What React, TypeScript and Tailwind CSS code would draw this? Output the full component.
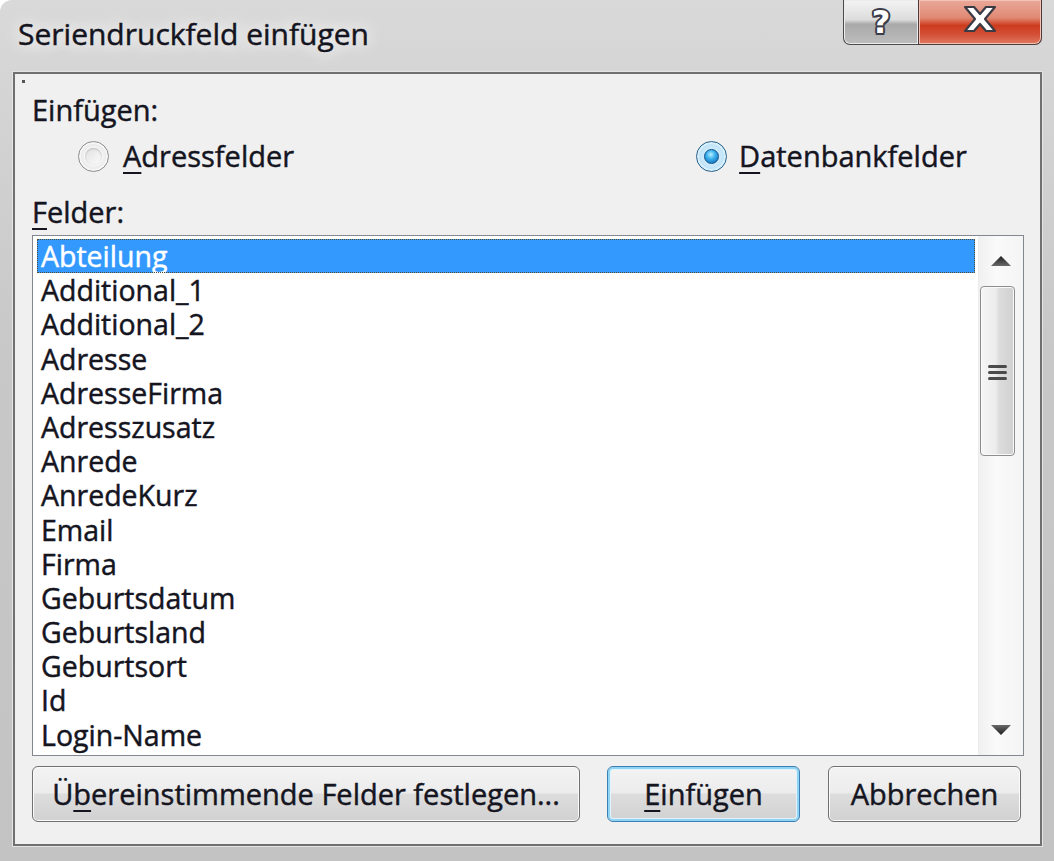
import type { ReactNode } from 'react'

const fields = [
  'Abteilung',
  'Additional_1',
  'Additional_2',
  'Adresse',
  'AdresseFirma',
  'Adresszusatz',
  'Anrede',
  'AnredeKurz',
  'Email',
  'Firma',
  'Geburtsdatum',
  'Geburtsland',
  'Geburtsort',
  'Id',
  'Login-Name',
  'Mobil',
  'Nachname',
  'Ort',
]

function U({ children }: { children: ReactNode }) {
  return <span className="underline decoration-[2px] underline-offset-[5px]">{children}</span>
}

function Radio({ checked }: { checked?: boolean }) {
  if (checked) {
    return (
      <span className="flex h-[31px] w-[31px] items-center justify-center rounded-full border border-[#2c628b] bg-[radial-gradient(circle,#e6f6ff_0%,#bfe3f7_60%,#8ccbee_100%)] shadow-[inset_0_0_0_2px_#d8f0fc]">
        <span className="h-[15px] w-[15px] rounded-full border border-[#0d4f8a] bg-[radial-gradient(circle_at_45%_35%,#b8f0ff_0%,#3ab0ec_40%,#0a5fb0_100%)]" />
      </span>
    )
  }
  return (
    <span className="flex h-[31px] w-[31px] items-center justify-center rounded-full border border-[#8e8f8f] bg-[radial-gradient(circle,#ffffff_0%,#f4f4f4_45%,#cfcfcf_100%)] shadow-[inset_0_0_0_2px_#f6f6f6]">
      <span className="h-[17px] w-[17px] rounded-full bg-[linear-gradient(135deg,#e2e2e2,#fbfbfb)] shadow-[inset_0_1px_2px_#bdbdbd]" />
    </span>
  )
}

function Button({ children, primary, className }: { children: ReactNode; primary?: boolean; className?: string }) {
  return (
    <button
      className={
        'flex h-[56px] items-center justify-center rounded-[6px] border bg-[linear-gradient(#f3f3f3_0%,#ececec_48%,#dddddd_50%,#d1d1d1_100%)] leading-[40px] ' +
        (primary
          ? 'border-[#3c7fb1] shadow-[inset_0_0_0_2px_#8fd4f5,inset_0_0_0_3px_#e3f4fd] '
          : 'border-[#707070] shadow-[inset_0_0_0_1px_#fbfbfb] ') +
        (className ?? '')
      }
    >
      {children}
    </button>
  )
}

function Arrow({ up }: { up?: boolean }) {
  return (
    <svg width="20" height="10" viewBox="0 0 20 10">
      <defs>
        <linearGradient id={up ? 'au' : 'ad'} x1="0" y1="0" x2="0" y2="1">
          <stop offset="0" stopColor={up ? '#1e1e1e' : '#6a6a6a'} />
          <stop offset="1" stopColor={up ? '#6a6a6a' : '#1e1e1e'} />
        </linearGradient>
      </defs>
      <polygon points={up ? '10,0 20,10 0,10' : '0,0 20,0 10,10'} fill={`url(#${up ? 'au' : 'ad'})`} />
    </svg>
  )
}

export default function App() {
  return (
    <div className="h-[861px] w-[1054px] overflow-hidden rounded-tl-[12px] bg-[linear-gradient(#d9d9d9_0%,#c8c8c8_40%,#c3c3c3_100%)] font-['Open_Sans',sans-serif] text-[29px] text-[#15151f] [-webkit-text-stroke:0.45px_currentColor]">
      {/* title bar */}
      <div className="flex h-[72px] items-start justify-between">
        <div className="pl-[18px] pt-[12px] text-[30px] leading-[44px] text-[#14141e] [text-shadow:0_0_14px_#ffffff,0_0_22px_#f4f4f4]">
          Seriendruckfeld einfügen
        </div>
        <div className="mr-[12px] flex h-[45px] [-webkit-text-stroke:0]">
          <div className="flex w-[75px] items-center justify-center rounded-bl-[7px] border border-t-0 border-r-0 border-[#4b4b4f] bg-[linear-gradient(#f4f4f4_0%,#dcdcdc_45%,#a9a9a9_55%,#bdbdbd_100%)] shadow-[inset_0_0_0_1px_#ececec]">
            <span className="font-['DejaVu_Sans',sans-serif] text-[32px] font-bold leading-[40px] text-white [text-shadow:-2px_0_0_#3d3d4a,2px_0_0_#3d3d4a,0_-2px_0_#3d3d4a,0_2px_0_#3d3d4a,-1.5px_-1.5px_0_#3d3d4a,1.5px_1.5px_0_#3d3d4a,1.5px_-1.5px_0_#3d3d4a,-1.5px_1.5px_0_#3d3d4a]">
              ?
            </span>
          </div>
          <div className="flex w-[124px] items-center justify-center rounded-br-[7px] border border-t-0 border-[#4b3a38] bg-[linear-gradient(#eaa898_0%,#e08a75_40%,#cd3b1d_58%,#d4523a_80%,#e07a60_100%)] shadow-[inset_0_0_0_1px_#f2c2b6]">
            <svg width="40" height="30" viewBox="0 0 40 30" className="mt-[-6px]">
              <path
                d="M5 3 H14 L20 10 L26 3 H35 L25 15 L35 27 H26 L20 20 L14 27 H5 L15 15 Z"
                fill="#ffffff"
                stroke="#3b3b45"
                strokeWidth="2.2"
                strokeLinejoin="round"
              />
            </svg>
          </div>
        </div>
      </div>

      {/* client area */}
      <div className="ml-[13px] flex h-[774px] w-[1029px] flex-col border-2 border-[#707070] bg-[#f0f0f0] shadow-[0_0_0_1px_#e4e4e4]">
        <div className="ml-[7px] mt-[6px] h-[3px] w-[3px] bg-[#555]" />
        <div className="ml-[17px] mt-[10px] leading-[34px]">Einfügen:</div>

        <div className="mt-[12px] flex h-[34px] items-center leading-[34px]">
          <div className="ml-[63px] flex items-center">
            <Radio />
            <span className="ml-[14px]">
              <U>A</U>dressfelder
            </span>
          </div>
          <div className="ml-[402px] flex items-center">
            <Radio checked />
            <span className="ml-[12px]">
              <U>D</U>atenbankfelder
            </span>
          </div>
        </div>

        <div className="ml-[17px] mt-[22px] leading-[34px]">
          <U>F</U>elder:
        </div>

        {/* list box */}
        <div className="ml-[17px] mt-[6px] flex h-[521px] w-[992px] border border-[#828790] bg-white">
          <div className="flex-1 overflow-hidden pl-[4px] pr-[3px] pt-[3px] text-[28.5px]">
            {fields.map((f, i) => (
              <div
                key={f}
                className={
                  'h-[34.2px] whitespace-nowrap pl-[4px] leading-[34.2px] ' +
                  (i === 0 ? 'bg-[#3399ff] text-white outline-1 outline-dotted outline-offset-[-1px] outline-[#5a4a30]' : '')
                }
              >
                {f}
              </div>
            ))}
          </div>
          <div className="flex w-[45px] flex-col border-l border-[#ececec] bg-[linear-gradient(90deg,#f0f0f0,#fafafa_40%,#f4f4f4)] pr-[4px]">
            <div className="flex h-[50px] items-center justify-center pl-[4px]">
              <Arrow up />
            </div>
            <div className="ml-[1px] mr-[4px] flex h-[170px] items-center justify-center rounded-[4px] border border-[#8c8e90] bg-[linear-gradient(90deg,#f6f6f6_0%,#ececec_45%,#dcdcdc_55%,#d0d0d0_100%)] shadow-[inset_0_0_0_1px_#fafafa]">
              <div className="flex flex-col gap-[3px] pt-[2px]">
                <div className="h-[3px] w-[19px] rounded-full bg-[#4a4a4a]" />
                <div className="h-[3px] w-[19px] rounded-full bg-[#4a4a4a]" />
                <div className="h-[3px] w-[19px] rounded-full bg-[#4a4a4a]" />
              </div>
            </div>
            <div className="flex-1" />
            <div className="flex h-[50px] items-center justify-center pl-[4px]">
              <Arrow />
            </div>
          </div>
        </div>

        {/* buttons */}
        <div className="ml-[17px] mt-[10px] flex">
          <Button className="w-[548px]">
            <span>
              Ü<U>b</U>ereinstimmende Felder festlegen...
            </span>
          </Button>
          <Button primary className="ml-[27px] w-[193px]">
            <span>
              <U>E</U>infügen
            </span>
          </Button>
          <Button className="ml-[28px] w-[193px]">Abbrechen</Button>
        </div>
      </div>
    </div>
  )
}
